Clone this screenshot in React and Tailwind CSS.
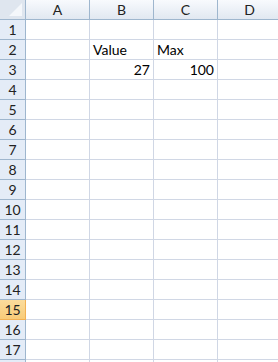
import React from "react";

const cols = ["A", "B", "C", "D"];
const rows = Array.from({ length: 18 }, (_, i) => i + 1);

const cellData = {
  "2-B": { t: "Value", align: "left" },
  "2-C": { t: "Max", align: "left" },
  "3-B": { t: "27", align: "right" },
  "3-C": { t: "100", align: "right" },
};

export default function App() {
  return (
    <div
      className="w-[278px] h-[362px] overflow-hidden bg-white"
      style={{ fontFamily: "Lato, 'Liberation Sans', sans-serif" }}
    >
      <div className="grid grid-cols-[26px_64px_64px_64px_64px] auto-rows-[20px] w-[282px]">
        {/* corner */}
        <div className="relative bg-[#dfe6ef] border-r border-b border-[#9eb6ce] flex items-end justify-end p-[3px]">
          <div className="w-[13px] h-[13px] bg-[#f4f7fb] [clip-path:polygon(100%_0,100%_100%,0_100%)]" />
        </div>
        {cols.map((c) => (
          <div
            key={c}
            className="bg-gradient-to-b from-[#f8fafd] to-[#e1e8f1] border-r border-b border-[#9eb6ce] flex items-center justify-center text-[14px] text-[#222] leading-none"
          >
            {c}
          </div>
        ))}
        {rows.map((r) => (
          <React.Fragment key={r}>
            <div
              className={
                r === 15
                  ? "bg-gradient-to-b from-[#fbdc9c] to-[#f8cc79] border-r border-b border-[#f2b154] flex items-center justify-center text-[14px] text-[#222] leading-none"
                  : "bg-[#e4ecf7] border-r border-b border-[#9eb6ce] flex items-center justify-center text-[14px] text-[#222] leading-none"
              }
            >
              {r}
            </div>
            {cols.map((c) => {
              const d = cellData[`${r}-${c}`];
              return (
                <div
                  key={c}
                  className={
                    "border-r border-b border-[#d0d7e5] flex items-center text-[14px] text-black leading-none px-[3px] " +
                    (d && d.align === "right" ? "justify-end" : "justify-start")
                  }
                >
                  {d ? d.t : null}
                </div>
              );
            })}
          </React.Fragment>
        ))}
      </div>
    </div>
  );
}
